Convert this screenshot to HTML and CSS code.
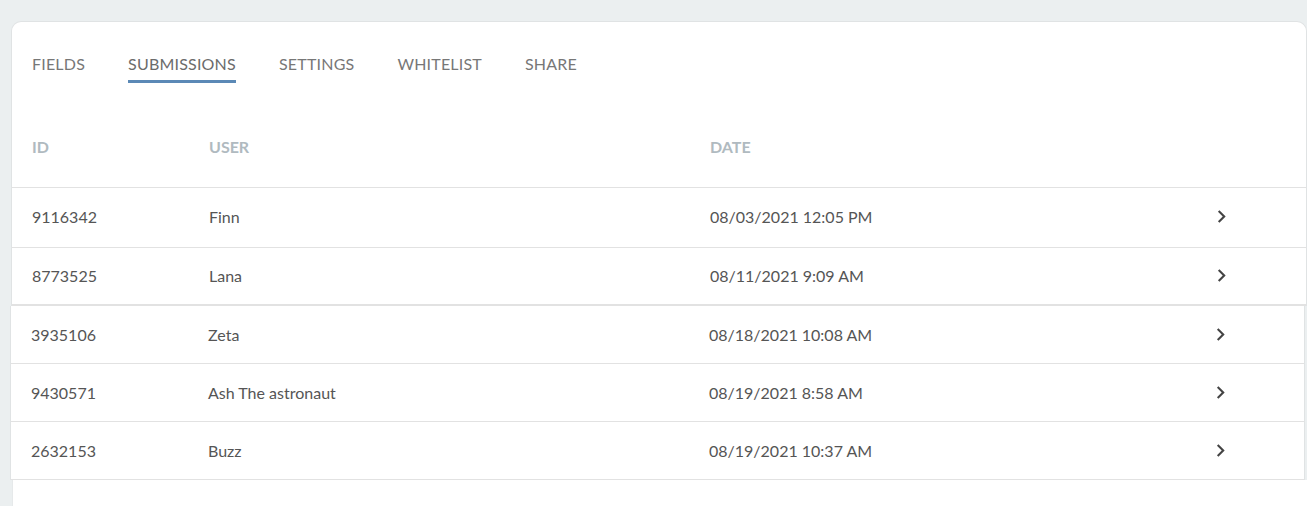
FILE: index.html
```html
<!DOCTYPE html>
<html lang="en">
<head>
    <meta charset="UTF-8">
    <meta name="viewport" content="width=device-width, initial-scale=1.0">
    <title>Submissions</title>
    <link rel="stylesheet" href="styles.css">
</head>
<body>
    <div class="card">
        <nav class="tabs">
            <a href="#" class="tab">Fields</a>
            <a href="#" class="tab active">Submissions</a>
            <a href="#" class="tab">Settings</a>
            <a href="#" class="tab">Whitelist</a>
            <a href="#" class="tab">Share</a>
        </nav>
        <div class="row head">
            <span>ID</span>
            <span>User</span>
            <span>Date</span>
            <span></span>
        </div>
        <div class="row">
            <span>9116342</span>
            <span>Finn</span>
            <span>08/03/2021 12:05 PM</span>
            <span class="go"><svg viewBox="0 0 24 24"><path d="M10 6L8.59 7.41 13.17 12l-4.58 4.59L10 18l6-6z"/></svg></span>
        </div>
        <div class="row last">
            <span>8773525</span>
            <span>Lana</span>
            <span>08/11/2021 9:09 AM</span>
            <span class="go"><svg viewBox="0 0 24 24"><path d="M10 6L8.59 7.41 13.17 12l-4.58 4.59L10 18l6-6z"/></svg></span>
        </div>
    </div>

    <div class="card lower">
        <div class="row">
            <span>3935106</span>
            <span>Zeta</span>
            <span>08/18/2021 10:08 AM</span>
            <span class="go"><svg viewBox="0 0 24 24"><path d="M10 6L8.59 7.41 13.17 12l-4.58 4.59L10 18l6-6z"/></svg></span>
        </div>
        <div class="row">
            <span>9430571</span>
            <span>Ash The astronaut</span>
            <span>08/19/2021 8:58 AM</span>
            <span class="go"><svg viewBox="0 0 24 24"><path d="M10 6L8.59 7.41 13.17 12l-4.58 4.59L10 18l6-6z"/></svg></span>
        </div>
        <div class="row">
            <span>2632153</span>
            <span>Buzz</span>
            <span>08/19/2021 10:37 AM</span>
            <span class="go"><svg viewBox="0 0 24 24"><path d="M10 6L8.59 7.41 13.17 12l-4.58 4.59L10 18l6-6z"/></svg></span>
        </div>
    </div>

    <div class="tail"></div>
</body>
</html>
```

FILE: styles.css
```css
body {
    margin: 0;
    background-color: #ebeff0;
    font-family: Lato, "Open Sans", sans-serif;
    color: #555;
}
.card {
    margin: 21px 0 0 11px;
    width: 1296px;
    box-sizing: border-box;
    background-color: #fff;
    border: 1px solid #e0e3e4;
    border-bottom: none;
    border-radius: 10px 10px 0 0;
}
.card.lower {
    margin: 0 0 0 10px;
    width: 1295px;
    border-top: none;
    border-radius: 0;
}
.tail {
    margin-left: 12px;
    height: 30px;
    background-color: #fff;
    border-left: 1px solid #e6e9ea;
}
.tabs {
    display: flex;
    gap: 43px;
    padding: 32px 20px 0;
}
.tab {
    display: block;
    padding-bottom: 6px;
    border-bottom: 3px solid transparent;
    font-size: 16px;
    line-height: 20px;
    letter-spacing: 0.2px;
    text-transform: uppercase;
    text-decoration: none;
    color: #777;
}
.tab.active {
    color: #6b6b6b;
    border-bottom-color: #5b89b6;
}
.row {
    display: grid;
    grid-template-columns: 177px 501px 507px 1fr;
    align-items: center;
    box-sizing: border-box;
    height: 60px;
    padding: 0 0 2px 20px;
    border-bottom: 1px solid #e2e2e2;
    font-size: 16px;
}
.row.last {
    height: 58px;
    border-bottom-width: 2px;
}
.lower .row {
    height: 58px;
    padding-bottom: 1px;
}
.row.head {
    height: auto;
    padding-top: 54px;
    padding-bottom: 30px;
    line-height: 20px;
    font-size: 16px;
    font-weight: bold;
    text-transform: uppercase;
    color: #b0bac0;
}
.go {
    display: flex;
}
.go svg {
    width: 25px;
    height: 25px;
    margin-left: -8px;
    fill: #444;
}
```
